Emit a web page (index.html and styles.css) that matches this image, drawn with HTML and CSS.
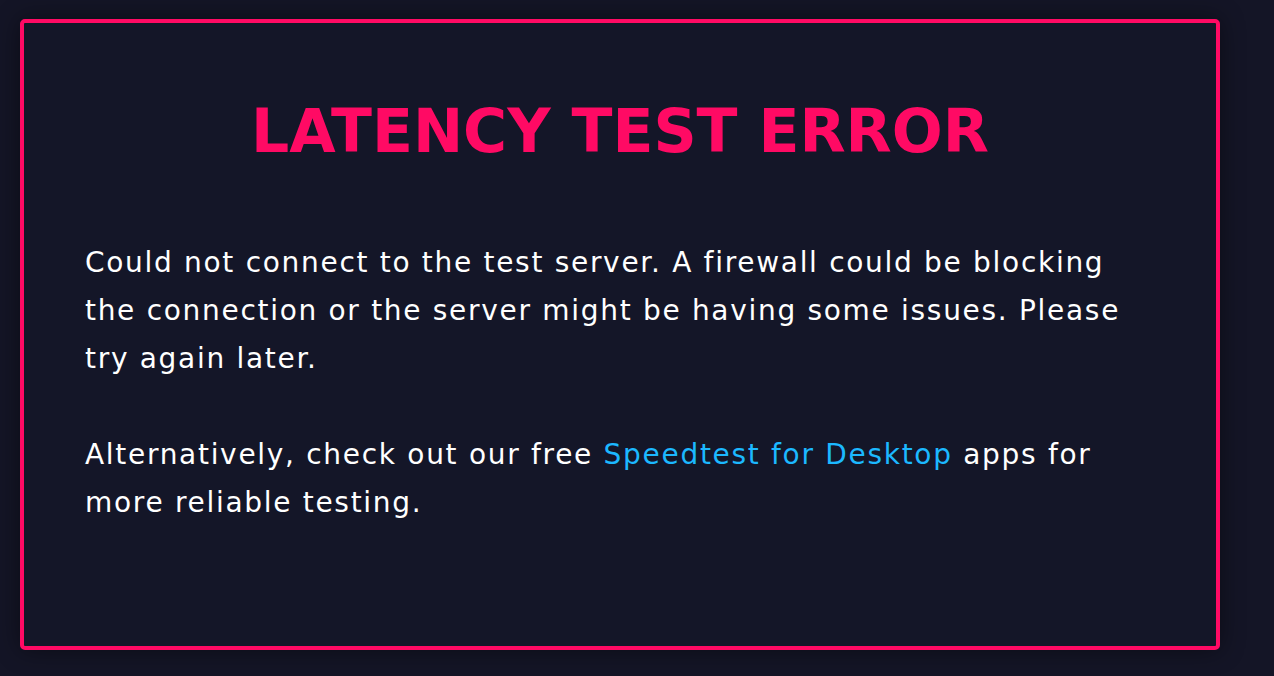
FILE: index.html
```html
<!DOCTYPE html>
<html lang="en">
<head>
    <meta charset="UTF-8">
    <meta name="viewport" content="width=device-width, initial-scale=1.0">
    <title>Latency Test Error</title>
    <link rel="stylesheet" href="styles.css">
</head>
<body>

    <div class="error-box">
        <h1>LATENCY TEST ERROR</h1>

        <p class="message">
            Could not connect to the test server. A firewall could be blocking
            the connection or the server might be having some issues. Please
            try again later.
        </p>

        <p class="message">
            Alternatively, check out our free <a href="#">Speedtest for Desktop</a> apps for
            more reliable testing.
        </p>
    </div>

</body>
</html>
```

FILE: styles.css
```css
body {
    background-color: #141526;
    color: white;
    font-family: 'DejaVu Sans', 'Liberation Sans', sans-serif;
    margin: 0;
    padding: 19px 54px 26px 20px;
}

.error-box {
    background-color: #141628;
    border: 4px solid #ff0a64;
    border-radius: 5px;
    box-shadow: 0 0 24px rgba(0, 0, 0, 0.45);
    height: 631px;
    box-sizing: border-box;
    padding: 0 79px 0 61px;
}

h1 {
    color: #ff0a64;
    font-size: 60px;
    font-weight: 700;
    text-align: center;
    margin: 0 -18px 0 0;
    padding-top: 70px;
    line-height: 76px;
}

.message {
    font-size: 28px;
    line-height: 48px;
    letter-spacing: 1.7px;
    margin: 70px 0 0;
}

.message + .message {
    margin-top: 48px;
}

.message a {
    color: #1cb8ff;
    text-decoration: none;
}
```
